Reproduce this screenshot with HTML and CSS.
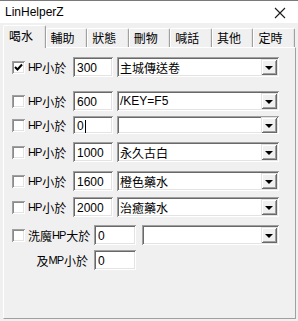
FILE: index.html
```html
<!DOCTYPE html>
<html lang="zh-Hant">
<head>
<meta charset="utf-8">
<title>LinHelperZ</title>
<link rel="stylesheet" href="styles.css">
</head>
<body>
<div class="window">
  <div class="titlebar">
    <span class="title">LinHelperZ</span>
    <svg class="close" width="12" height="12" viewBox="0 0 12 12"><path d="M1 1 L11 11 M11 1 L1 11" stroke="#1a1a1a" stroke-width="1.1" fill="none"/></svg>
  </div>
  <div class="body">
    <div class="tabs">
      <div class="tab active">喝水</div>
      <div class="tab">輔助</div>
      <div class="tab">狀態</div>
      <div class="tab">刪物</div>
      <div class="tab">喊話</div>
      <div class="tab">其他</div>
      <div class="tab">定時</div>
    </div>
    <div class="panel">
      <div class="row">
        <span class="cb checked"><svg width="9" height="9" viewBox="0 0 9 9"><path d="M1 4 L3.5 6.5 L8 1.5" stroke="#000" stroke-width="2" fill="none"/></svg></span>
        <span class="label"><span class="lat">HP</span>小於</span>
        <span class="edit">300</span>
        <span class="combo"><span class="ctext">主城傳送卷</span><span class="btn"><i></i></span></span>
      </div>
      <div class="row">
        <span class="cb"></span>
        <span class="label"><span class="lat">HP</span>小於</span>
        <span class="edit">600</span>
        <span class="combo"><span class="ctext lat-text">/KEY=F5</span><span class="btn"><i></i></span></span>
      </div>
      <div class="row">
        <span class="cb"></span>
        <span class="label"><span class="lat">HP</span>小於</span>
        <span class="edit">0<span class="caret"></span></span>
        <span class="combo"><span class="ctext"></span><span class="btn"><i></i></span></span>
      </div>
      <div class="row">
        <span class="cb"></span>
        <span class="label"><span class="lat">HP</span>小於</span>
        <span class="edit">1000</span>
        <span class="combo"><span class="ctext">永久古白</span><span class="btn"><i></i></span></span>
      </div>
      <div class="row">
        <span class="cb"></span>
        <span class="label"><span class="lat">HP</span>小於</span>
        <span class="edit">1600</span>
        <span class="combo"><span class="ctext">橙色藥水</span><span class="btn"><i></i></span></span>
      </div>
      <div class="row">
        <span class="cb"></span>
        <span class="label"><span class="lat">HP</span>小於</span>
        <span class="edit">2000</span>
        <span class="combo"><span class="ctext">治癒藥水</span><span class="btn"><i></i></span></span>
      </div>
      <div class="row wide">
        <span class="cb"></span>
        <span class="label">洗魔<span class="lat">HP</span>大於</span>
        <span class="edit">0</span>
        <span class="combo"><span class="ctext"></span><span class="btn"><i></i></span></span>
      </div>
      <div class="row wide">
        <span class="cb hidden"></span>
        <span class="label right">及<span class="lat">MP</span>小於</span>
        <span class="edit">0</span>
      </div>
    </div>
  </div>
</div>
</body>
</html>
```

FILE: styles.css
```css
* { box-sizing: border-box; }
html, body { margin: 0; padding: 0; }
body {
  width: 298px;
  height: 321px;
  overflow: hidden;
  background: #f0f0f0;
  font-family: "Liberation Sans", "Noto Sans CJK TC", sans-serif;
  font-size: 12px;
  color: #000;
}
.window {
  width: 298px;
  height: 321px;
  border-top: 1px solid #7a7a7a;
  display: flex;
  flex-direction: column;
}
.titlebar {
  height: 22px;
  background: #fff;
  display: flex;
  align-items: center;
  justify-content: space-between;
  padding: 0 12px 0 5px;
  flex: none;
}
.title { font-size: 12px; color: #000; }
.close { display: block; margin-top: 1px; }

.body {
  flex: 1;
  padding: 2px 2px 2px 3px;
  display: flex;
  flex-direction: column;
}
.tabs {
  display: flex;
  height: 22px;
  align-items: flex-end;
  width: 292px;
  flex: none;
}
.tab {
  flex: 1;
  height: 19px;
  border-top: 1px solid #fff;
  border-left: 1px solid #fff;
  border-right: 1px solid #a0a0a0;
  border-radius: 2px 2px 0 0;
  box-shadow: inset -1px 0 0 #e3e3e3;
  font-family: "Noto Sans CJK TC", sans-serif;
  font-size: 12px;
  display: flex;
  align-items: center;
  padding-left: 4px;
  line-height: 1;
  background: #f0f0f0;
}
.tab.active {
  height: 23px;
  margin-bottom: -1px;
  position: relative;
  z-index: 1;
  padding-left: 5px;
  padding-bottom: 2px;
}
.panel {
  width: 293px;
  height: 272px;
  border-top: 1px solid #fff;
  border-left: 1px solid #fff;
  border-right: 1px solid #a0a0a0;
  border-bottom: 1px solid #a0a0a0;
  padding: 9px 0 0 8px;
  display: flex;
  flex-direction: column;
}
.row {
  display: flex;
  align-items: center;
  height: 20px;
  flex: none;
}
.row:nth-child(2) { margin-top: 14px; }
.row:nth-child(3) { margin-top: 5px; height: 18px; }
.row:nth-child(4) { margin-top: 8px; }
.row:nth-child(5) { margin-top: 9px; }
.row:nth-child(6) { margin-top: 6px; }
.row:nth-child(7) { margin-top: 8px; }
.row:nth-child(8) { margin-top: 5px; }

.cb {
  width: 13px;
  height: 13px;
  background: #fff;
  box-shadow: inset 1px 1px 0 #a0a0a0, inset -1px -1px 0 #fff, inset 2px 2px 0 #8a8a8a, inset -2px -2px 0 #e3e3e3;
  flex: none;
  display: flex;
  align-items: center;
  justify-content: center;
}
.cb.hidden { visibility: hidden; }
.cb svg { display: block; }
.label {
  width: 48px;
  padding-left: 3px;
  flex: none;
  white-space: nowrap;
  font-family: "Noto Sans CJK TC", sans-serif;
  display: flex;
  align-items: center;
}
.label.right { justify-content: flex-end; padding-right: 6px; }
.lat {
  font-family: "Liberation Sans", sans-serif;
  font-size: 11px;
  letter-spacing: -1px;
  margin-right: 1px;
}
.row.wide .label { width: 69px; }

.edit, .combo {
  background: #fff;
  height: 100%;
  box-shadow: inset 1px 1px 0 #a0a0a0, inset -1px -1px 0 #fff, inset 2px 2px 0 #696969, inset -2px -2px 0 #e3e3e3;
  display: flex;
  align-items: center;
  flex: none;
  white-space: nowrap;
}
.edit {
  width: 40px;
  padding: 2px 0 0 4px;
}
.row.wide .edit { width: 42px; }
.caret {
  display: inline-block;
  width: 1px;
  height: 13px;
  background: #000;
  margin-left: 1px;
}
.combo {
  width: 162px;
  margin-left: 4px;
  justify-content: space-between;
  padding: 2px 2px 2px 3px;
}
.row.wide .combo { width: 137px; margin-left: 6px; }
.ctext {
  font-family: "Noto Sans CJK TC", "Liberation Sans", sans-serif;
}
.ctext.lat-text { font-family: "Liberation Sans", sans-serif; }
.btn {
  width: 16px;
  height: 16px;
  background: #f0f0f0;
  box-shadow: inset 1px 1px 0 #e3e3e3, inset -1px -1px 0 #696969, inset 2px 2px 0 #fff, inset -2px -2px 0 #a0a0a0;
  display: flex;
  align-items: center;
  justify-content: center;
  flex: none;
}
.btn i {
  width: 0;
  height: 0;
  border-left: 4px solid transparent;
  border-right: 4px solid transparent;
  border-top: 4px solid #000;
  margin-top: 1px;
}
```
